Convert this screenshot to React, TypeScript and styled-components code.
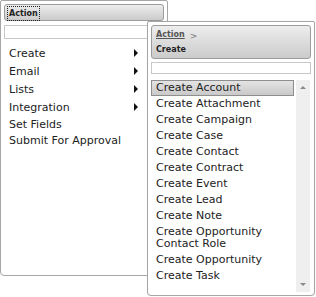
import React from 'react';
import styled, { createGlobalStyle } from 'styled-components';

const GlobalStyle = createGlobalStyle`
  body {
    margin: 0;
    background: #fff;
    font-family: "DejaVu Sans", Verdana, sans-serif;
    color: #222;
  }
`;

const Stage = styled.div`
  position: relative;
  width: 316px;
  height: 297px;
`;

const Panel = styled.div`
  box-sizing: border-box;
  background: #fff;
  border: 1px solid #a6a6a6;
  border-radius: 2px 2px 4px 4px;
  padding: 3px;
  display: flex;
  flex-direction: column;
`;

const MainPanel = styled(Panel)`
  width: 168px;
  height: 276px;
`;

const SubPanel = styled(Panel)`
  position: absolute;
  left: 147px;
  top: 21px;
  width: 168px;
  height: 275px;
  box-shadow: 0 0 1px rgba(0, 0, 0, 0.15);
`;

const Header = styled.div<{ $tall?: boolean }>`
  box-sizing: border-box;
  flex: none;
  height: ${p => (p.$tall ? '34px' : '17px')};
  border: 1px solid #9c9c9c;
  border-radius: 3px;
  background: linear-gradient(#ededed, #cbcbcb);
  padding: ${p => (p.$tall ? '1px 4px' : '2px 3px')};
  font-size: 8px;
  font-weight: bold;
  color: #222;
`;

const FocusLabel = styled.span`
  outline: 1px dotted #222;
  outline-offset: 0;
  padding: 1px 1px;
  line-height: 11px;
  display: inline-block;
`;

const Crumb = styled.div`
  display: flex;
  align-items: center;
  gap: 5px;
  height: 14px;
  a {
    color: #555;
    text-decoration: underline;
  }
`;

const CrumbArrow = styled.span`
  color: #777;
  font-weight: normal;
  font-size: 9px;
  margin-top: 3px;
`;

const Current = styled.div`
  margin-top: 4px;
`;

const Search = styled.input`
  box-sizing: border-box;
  flex: none;
  margin-top: 3px;
  height: 12px;
  width: 100%;
  border: 1px solid #c8c8c8;
  outline: none;
  padding: 0;
`;

const MainSearch = styled(Search)`
  margin-top: 4px;
  height: 14px;
  width: 175px;
`;

const Menu = styled.ul`
  list-style: none;
  margin: 5px 0 0;
  padding: 0;
  font-size: 11px;
`;

const MenuItem = styled.li<{ $sub?: boolean }>`
  display: flex;
  align-items: center;
  justify-content: space-between;
  height: ${p => (p.$sub ? '18px' : '16px')};
  padding: 0 26px 0 5px;
  white-space: nowrap;
`;

const Caret = styled.span`
  width: 0;
  height: 0;
  border-top: 4px solid transparent;
  border-bottom: 4px solid transparent;
  border-left: 4px solid #111;
`;

const ListBox = styled.div`
  display: flex;
  margin-top: 6px;
  flex: 1;
  min-height: 0;
`;

const Options = styled.ul`
  list-style: none;
  margin: 0;
  padding: 0;
  flex: 1;
  font-size: 11px;
`;

const Option = styled.li<{ $active?: boolean }>`
  box-sizing: border-box;
  padding: 1px 4px;
  line-height: 12px;
  border: 1px solid ${p => (p.$active ? '#8e8e8e' : 'transparent')};
  background: ${p => (p.$active ? 'linear-gradient(#e4e4e4, #c9c9c9)' : 'transparent')};
  margin-right: 2px;
`;

const Scrollbar = styled.div`
  width: 14px;
  background: #efefef;
  display: flex;
  flex-direction: column;
  justify-content: space-between;
  align-items: center;
  padding: 6px 0 6px;
  margin-right: 1px;
`;

const Arrow = styled.span<{ $down?: boolean }>`
  width: 0;
  height: 0;
  border-left: 3px solid transparent;
  border-right: 3px solid transparent;
  ${p => (p.$down ? 'border-top: 3px solid #8a8a8a;' : 'border-bottom: 3px solid #8a8a8a;')}
`;

const mainItems = [
  { label: 'Create', sub: true },
  { label: 'Email', sub: true },
  { label: 'Lists', sub: true },
  { label: 'Integration', sub: true },
  { label: 'Set Fields', sub: false },
  { label: 'Submit For Approval', sub: false },
];

const createItems = [
  'Create Account',
  'Create Attachment',
  'Create Campaign',
  'Create Case',
  'Create Contact',
  'Create Contract',
  'Create Event',
  'Create Lead',
  'Create Note',
  'Create Opportunity Contact Role',
  'Create Opportunity',
  'Create Task',
];

export default function App() {
  return (
    <>
      <GlobalStyle />
      <Stage>
        <MainPanel>
          <Header>
            <FocusLabel>Action</FocusLabel>
          </Header>
          <MainSearch />
          <Menu>
            {mainItems.map(item => (
              <MenuItem key={item.label} $sub={item.sub}>
                {item.label}
                {item.sub && <Caret />}
              </MenuItem>
            ))}
          </Menu>
        </MainPanel>
        <SubPanel>
          <Header $tall>
            <Crumb>
              <a>Action</a>
              <CrumbArrow>&gt;</CrumbArrow>
            </Crumb>
            <Current>Create</Current>
          </Header>
          <Search />
          <ListBox>
            <Options>
              {createItems.map((label, i) => (
                <Option key={label} $active={i === 0}>
                  {label === 'Create Opportunity Contact Role' ? (
                    <>
                      Create Opportunity
                      <br />
                      Contact Role
                    </>
                  ) : (
                    label
                  )}
                </Option>
              ))}
            </Options>
            <Scrollbar>
              <Arrow />
              <Arrow $down />
            </Scrollbar>
          </ListBox>
        </SubPanel>
      </Stage>
    </>
  );
}
